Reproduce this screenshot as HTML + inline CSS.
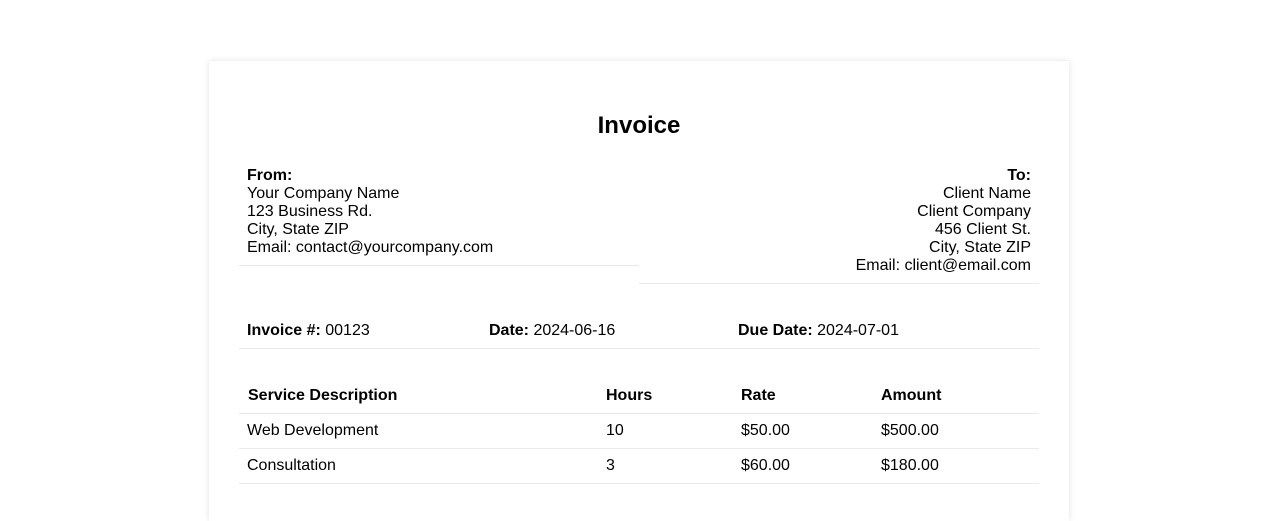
<!DOCTYPE html>
<html><head><style>
body{margin:0;background:#fff;font-family:"Liberation Sans",Arial,sans-serif;font-size:16px;color:#000;width:1278px;height:501px;overflow:hidden;position:relative}
.card{position:absolute;left:209px;top:61px;width:860px;height:460px;background:#fff;box-shadow:0 0 6px rgba(0,0,0,0.12)}
.a{position:absolute;line-height:18px;white-space:nowrap}
.l{position:absolute;height:1px;background:#eaeaea}
b{font-weight:bold}
</style></head><body>
<div class="card"></div>
<div class="a" style="left:0;width:1278px;text-align:center;top:112px;font-size:24px;line-height:28px;font-weight:bold">Invoice</div>
<div class="a" style="left:247px;top:167px"><b>From:</b><br>Your Company Name<br>123 Business Rd.<br>City, State ZIP<br>Email: contact@yourcompany.com</div>
<div class="l" style="left:239px;width:400px;top:265px"></div>
<div class="a" style="right:247px;top:167px;text-align:right"><b>To:</b><br>Client Name<br>Client Company<br>456 Client St.<br>City, State ZIP<br>Email: client@email.com</div>
<div class="l" style="left:639px;width:400px;top:283px"></div>
<div class="a" style="left:247px;top:322px"><b>Invoice #:</b> 00123</div>
<div class="a" style="left:489px;top:322px"><b>Date:</b> 2024-06-16</div>
<div class="a" style="left:738px;top:322px"><b>Due Date:</b> 2024-07-01</div>
<div class="l" style="left:239px;width:800px;top:348px"></div>
<div class="a" style="left:248px;top:387px;font-weight:bold">Service Description</div>
<div class="a" style="left:606px;top:387px;font-weight:bold">Hours</div>
<div class="a" style="left:741px;top:387px;font-weight:bold">Rate</div>
<div class="a" style="left:881px;top:387px;font-weight:bold">Amount</div>
<div class="l" style="left:239px;width:800px;top:413px"></div>
<div class="a" style="left:247px;top:422px">Web Development</div>
<div class="a" style="left:606px;top:422px">10</div>
<div class="a" style="left:741px;top:422px">$50.00</div>
<div class="a" style="left:881px;top:422px">$500.00</div>
<div class="l" style="left:239px;width:800px;top:448px"></div>
<div class="a" style="left:247px;top:457px">Consultation</div>
<div class="a" style="left:606px;top:457px">3</div>
<div class="a" style="left:741px;top:457px">$60.00</div>
<div class="a" style="left:881px;top:457px">$180.00</div>
<div class="l" style="left:239px;width:800px;top:483px"></div>
</body></html>
